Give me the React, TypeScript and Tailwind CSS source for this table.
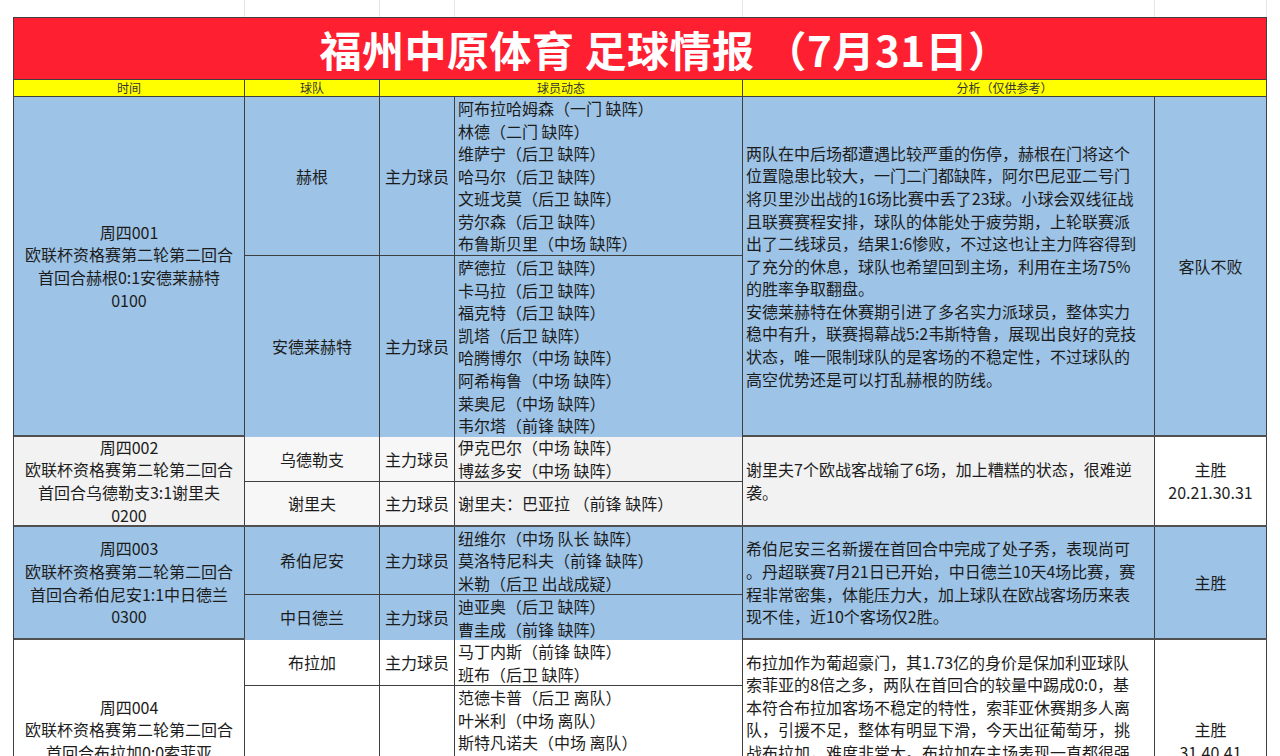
import React from "react";

type Team = { name: string; h: string; players: string[] };
type Match = {
  h: string;
  timeBg: string;
  teamBg: string;
  playersBg: string;
  anaBg: string;
  resBg: string;
  time: string[];
  teams: Team[];
  analysis: string[];
  result: string[];
};

const matches: Match[] = [
  {
    h: "h-[340px]",
    timeBg: "bg-[#9dc3e6]",
    teamBg: "bg-[#9dc3e6]",
    playersBg: "bg-[#9dc3e6]",
    anaBg: "bg-[#9dc3e6]",
    resBg: "bg-[#9dc3e6]",
    time: ["周四001", "欧联杯资格赛第二轮第二回合", "首回合赫根0:1安德莱赫特", "0100"],
    teams: [
      {
        name: "赫根",
        h: "h-[159px]",
        players: [
          "阿布拉哈姆森（一门 缺阵）",
          "林德（二门 缺阵）",
          "维萨宁（后卫 缺阵）",
          "哈马尔（后卫 缺阵）",
          "文班戈莫（后卫 缺阵）",
          "劳尔森（后卫 缺阵）",
          "布鲁斯贝里（中场 缺阵）",
        ],
      },
      {
        name: "安德莱赫特",
        h: "flex-1",
        players: [
          "萨德拉（后卫 缺阵）",
          "卡马拉（后卫 缺阵）",
          "福克特（后卫 缺阵）",
          "凯塔（后卫 缺阵）",
          "哈腾博尔（中场 缺阵）",
          "阿希梅鲁（中场 缺阵）",
          "莱奥尼（中场 缺阵）",
          "韦尔塔（前锋 缺阵）",
        ],
      },
    ],
    analysis: [
      "两队在中后场都遭遇比较严重的伤停，赫根在门将这个",
      "位置隐患比较大，一门二门都缺阵，阿尔巴尼亚二号门",
      "将贝里沙出战的16场比赛中丢了23球。小球会双线征战",
      "且联赛赛程安排，球队的体能处于疲劳期，上轮联赛派",
      "出了二线球员，结果1:6惨败，不过这也让主力阵容得到",
      "了充分的休息，球队也希望回到主场，利用在主场75%",
      "的胜率争取翻盘。",
      "安德莱赫特在休赛期引进了多名实力派球员，整体实力",
      "稳中有升，联赛揭幕战5:2韦斯特鲁，展现出良好的竞技",
      "状态，唯一限制球队的是客场的不稳定性，不过球队的",
      "高空优势还是可以打乱赫根的防线。",
    ],
    result: ["客队不败"],
  },
  {
    h: "h-[90px]",
    timeBg: "bg-[#f2f2f2]",
    teamBg: "bg-[#f7f7f7]",
    playersBg: "bg-[#f2f2f2]",
    anaBg: "bg-[#f2f2f2]",
    resBg: "bg-white",
    time: ["周四002", "欧联杯资格赛第二轮第二回合", "首回合乌德勒支3:1谢里夫", "0200"],
    teams: [
      {
        name: "乌德勒支",
        h: "h-[45px]",
        players: ["伊克巴尔（中场 缺阵）", "博兹多安（中场 缺阵）"],
      },
      {
        name: "谢里夫",
        h: "flex-1",
        players: ["谢里夫：巴亚拉 （前锋 缺阵）"],
      },
    ],
    analysis: ["谢里夫7个欧战客战输了6场，加上糟糕的状态，很难逆", "袭。"],
    result: ["主胜", "20.21.30.31"],
  },
  {
    h: "h-[113px]",
    timeBg: "bg-[#9dc3e6]",
    teamBg: "bg-[#9dc3e6]",
    playersBg: "bg-[#9dc3e6]",
    anaBg: "bg-[#9dc3e6]",
    resBg: "bg-[#9dc3e6]",
    time: ["周四003", "欧联杯资格赛第二轮第二回合", "首回合希伯尼安1:1中日德兰", "0300"],
    teams: [
      {
        name: "希伯尼安",
        h: "h-[68px]",
        players: ["纽维尔（中场 队长 缺阵）", "莫洛特尼科夫（前锋 缺阵）", "米勒（后卫 出战成疑）"],
      },
      {
        name: "中日德兰",
        h: "flex-1",
        players: ["迪亚奥（后卫 缺阵）", "曹圭成（前锋 缺阵）"],
      },
    ],
    analysis: [
      "希伯尼安三名新援在首回合中完成了处子秀，表现尚可",
      "。丹超联赛7月21日已开始，中日德兰10天4场比赛，赛",
      "程非常密集，体能压力大，加上球队在欧战客场历来表",
      "现不佳，近10个客场仅2胜。",
    ],
    result: ["主胜"],
  },
  {
    h: "h-[204px]",
    timeBg: "bg-white",
    teamBg: "bg-white",
    playersBg: "bg-white",
    anaBg: "bg-white",
    resBg: "bg-white",
    time: ["周四004", "欧联杯资格赛第二轮第二回合", "首回合布拉加0:0索菲亚", "0400"],
    teams: [
      {
        name: "布拉加",
        h: "h-[46px]",
        players: ["马丁内斯（前锋 缺阵）", "班布（后卫 缺阵）"],
      },
      {
        name: "索菲亚",
        h: "flex-1",
        players: [
          "范德卡普（后卫 离队）",
          "叶米利（中场 离队）",
          "斯特凡诺夫（中场 离队）",
          "格鲁耶夫（后卫 离队）",
          "彼得罗夫（中场 离队）",
          "帕夫洛夫（前锋 离队）",
          "伊万诺夫（前锋 离队）",
        ],
      },
    ],
    analysis: [
      "布拉加作为葡超豪门，其1.73亿的身价是保加利亚球队",
      "索菲亚的8倍之多，两队在首回合的较量中踢成0:0，基",
      "本符合布拉加客场不稳定的特性，索菲亚休赛期多人离",
      "队，引援不足，整体有明显下滑，今天出征葡萄牙，挑",
      "战布拉加，难度非常大。布拉加在主场表现一直都很强",
      "势，近期状态火热，主力阵容齐整，本场依托主场优势",
      "有望取胜，顺利晋级下一轮，索菲亚客场难有作为，",
      "看好主队。",
    ],
    result: ["主胜", "31.40.41"],
  },
];

const BC = "border-[#3f3f3f]";

function Lines({ lines, center }: { lines: string[]; center?: boolean }) {
  return (
    <div className={center ? "text-center" : "text-left"}>
      {lines.map((l, i) => (
        <div key={i} className="whitespace-nowrap">
          {l}
        </div>
      ))}
    </div>
  );
}

function MatchRow({ m }: { m: Match }) {
  return (
    <div className={`flex ${m.h} border-b-2 border-[#505050]`}>
      <div className={`w-[231px] shrink-0 border-r ${BC} ${m.timeBg} flex items-center justify-center`}>
        <Lines lines={m.time} center />
      </div>
      <div className="w-[498px] shrink-0 flex flex-col">
        {m.teams.map((t, i) => (
          <div
            key={i}
            className={`flex ${t.h} ${i < m.teams.length - 1 ? `border-b ${BC}` : ""}`}
          >
            <div className={`w-[135px] shrink-0 border-r ${BC} ${m.teamBg} flex items-center justify-center`}>
              {t.name}
            </div>
            <div className={`w-[75px] shrink-0 border-r ${BC} ${m.teamBg} flex items-center justify-center`}>
              主力球员
            </div>
            <div className={`w-[288px] shrink-0 border-r ${BC} ${m.playersBg} flex items-center pl-[3px]`}>
              <Lines lines={t.players} />
            </div>
          </div>
        ))}
      </div>
      <div className={`w-[412px] shrink-0 border-r ${BC} ${m.anaBg} flex items-center pl-[3px] overflow-hidden`}>
        <Lines lines={m.analysis} />
      </div>
      <div className={`w-[112px] shrink-0 border-r ${BC} ${m.resBg} flex items-center justify-center`}>
        <Lines lines={m.result} center />
      </div>
    </div>
  );
}

export default function App() {
  return (
    <div className="w-[1280px] h-[756px] overflow-hidden bg-white font-['Microsoft_YaHei','Noto_Sans_CJK_SC','Noto_Sans',sans-serif] text-[16px] leading-[22.6px] text-[#1c1c1c] [text-spacing-trim:space-all]">
      <div className="flex h-[17px]">
        <div className="w-[14px] shrink-0" />
        <div className="w-[231px] shrink-0 border-r border-[#e6e6e6]" />
        <div className="w-[135px] shrink-0 border-r border-[#e6e6e6]" />
        <div className="w-[75px] shrink-0 border-r border-[#e6e6e6]" />
        <div className="w-[288px] shrink-0 border-r border-[#e6e6e6]" />
        <div className="w-[412px] shrink-0 border-r border-[#e6e6e6]" />
        <div className="w-[112px] shrink-0 border-r border-[#e6e6e6]" />
      </div>
      <div className="flex">
        <div className="w-[13px] shrink-0" />
        <div className={`w-[1254px] shrink-0 border-l ${BC}`}>
          <div className={`h-[63px] bg-[#fe1f31] border-t border-r border-b ${BC} flex items-center justify-center pl-[50px]`}>
            <span className="text-white font-bold text-[42px] leading-[50px] tracking-[0.5px] whitespace-nowrap">
              福州中原体育 足球情报 （7月31日）
            </span>
          </div>
          <div className={`flex h-[17px] bg-[#ffff00] border-b ${BC} text-[12px] leading-[16px] text-[#333]`}>
            <div className={`w-[231px] shrink-0 border-r ${BC} text-center`}>时间</div>
            <div className={`w-[135px] shrink-0 border-r ${BC} text-center`}>球队</div>
            <div className={`w-[363px] shrink-0 border-r ${BC} text-center`}>球员动态</div>
            <div className={`w-[524px] shrink-0 border-r ${BC} text-center`}>分析（仅供参考）</div>
          </div>
          {matches.map((m, i) => (
            <MatchRow key={i} m={m} />
          ))}
        </div>
        <div className="w-[13px] shrink-0" />
      </div>
    </div>
  );
}
